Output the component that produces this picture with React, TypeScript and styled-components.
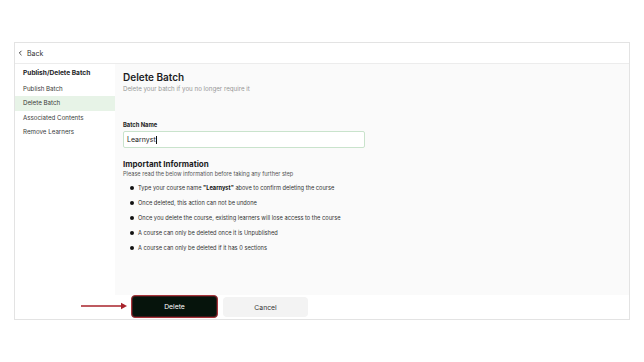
import React from "react";
import styled, { createGlobalStyle } from "styled-components";

const GlobalStyle = createGlobalStyle`
  html, body {
    margin: 0;
    padding: 0;
    background: #ffffff;
  }
  body {
    font-family: Inter, "Noto Sans", "Liberation Sans", sans-serif;
    color: #1d1d1f;
  }
`;

const Page = styled.div`
  width: 644px;
  height: 362px;
  padding: 42px 14px 0 14px;
  box-sizing: border-box;
`;

const Frame = styled.div`
  width: 616px;
  height: 278px;
  border: 1px solid #e3e3e3;
  box-sizing: border-box;
  display: flex;
  flex-direction: column;
  background: #ffffff;
`;

const TopBar = styled.div`
  height: 20px;
  flex-shrink: 0;
  display: flex;
  align-items: center;
  gap: 4px;
  padding-left: 3px;
  border-bottom: 1px solid #ececec;
  font-size: 7px;
  color: #333;
`;

const Body = styled.div`
  flex: 1;
  display: flex;
  min-height: 0;
`;

const Sidebar = styled.nav`
  width: 100px;
  flex-shrink: 0;
  padding-top: 2px;
  display: flex;
  flex-direction: column;
`;

const SideTitle = styled.div`
  font-size: 6.6px;
  font-weight: 700;
  color: #1d1d1f;
  padding: 0 8px;
  height: 14px;
  line-height: 14px;
  margin-bottom: 1.5px;
`;

const SideItem = styled.div<{ active?: boolean }>`
  font-size: 6.2px;
  color: #3a3a3a;
  padding: 0 8px;
  height: 14.6px;
  line-height: 14.6px;
  background: ${(p) => (p.active ? "#e7f3e7" : "transparent")};
`;

const Main = styled.div`
  flex: 1;
  display: flex;
  flex-direction: column;
`;

const Content = styled.section`
  flex: 1;
  background: #fafafa;
  padding: 6px 8px 0 8px;
`;

const Title = styled.h1`
  margin: 0;
  font-size: 10px;
  font-weight: 600;
  color: #1d1d1f;
  line-height: 14px;
`;

const Subtitle = styled.p`
  margin: 0;
  font-size: 6.2px;
  color: #969696;
  line-height: 10px;
`;

const Label = styled.label`
  display: block;
  margin-top: 27px;
  font-size: 5.8px;
  font-weight: 700;
  color: #222;
  line-height: 8px;
`;

const Input = styled.div`
  margin-top: 2px;
  width: 242px;
  height: 17px;
  box-sizing: border-box;
  border: 1px solid #c9e3cc;
  border-radius: 2px;
  background: #ffffff;
  display: flex;
  align-items: center;
  padding-left: 3px;
  font-size: 7px;
  color: #222;
`;

const Caret = styled.span`
  display: inline-block;
  width: 0.8px;
  height: 8px;
  background: #111;
  margin-left: 0.5px;
`;

const InfoTitle = styled.h2`
  margin: 11px 0 0 0;
  font-size: 8px;
  font-weight: 700;
  color: #1d1d1f;
  line-height: 10px;
`;

const InfoNote = styled.p`
  margin: 0;
  font-size: 5.6px;
  color: #555;
  line-height: 10px;
`;

const List = styled.ul`
  list-style: none;
  margin: 1px 0 0 0;
  padding: 0 0 0 7px;
  display: flex;
  flex-direction: column;
`;

const Item = styled.li`
  display: flex;
  align-items: center;
  gap: 4px;
  height: 15px;
  font-size: 5.7px;
  color: #333;
`;

const Dot = styled.span`
  width: 4px;
  height: 4px;
  border-radius: 50%;
  background: #111;
  flex-shrink: 0;
`;

const Footer = styled.footer`
  position: relative;
  height: 24px;
  flex-shrink: 0;
  display: flex;
  align-items: flex-start;
  gap: 5px;
  padding-left: 16px;
`;

const Button = styled.button<{ primary?: boolean }>`
  width: ${(p) => (p.primary ? "87px" : "85px")};
  height: ${(p) => (p.primary ? "23px" : "20px")};
  margin-top: ${(p) => (p.primary ? "0" : "2px")};
  box-sizing: border-box;
  border-radius: 4px;
  font-family: inherit;
  font-size: 6.8px;
  cursor: pointer;
  border: ${(p) => (p.primary ? "1.5px solid #a8343a" : "none")};
  background: ${(p) => (p.primary ? "#06140c" : "#f3f3f3")};
  color: ${(p) => (p.primary ? "#ffffff" : "#333")};
  box-shadow: ${(p) => (p.primary ? "inset 0 0 0 1px #3a1a1a" : "none")};
`;

const Arrow = styled.svg`
  position: absolute;
  left: -34px;
  top: 7px;
`;

const items = [
  <>
    Type your course name <b style={{ color: "#111" }}>"Learnyst"</b> above to
    confirm deleting the course
  </>,
  <>Once deleted, this action can not be undone</>,
  <>Once you delete the course, existing learners will lose access to the course</>,
  <>A course can only be deleted once it is Unpublished</>,
  <>A course can only be deleted if it has 0 sections</>,
];

export default function App() {
  return (
    <>
      <GlobalStyle />
      <Page>
        <Frame>
          <TopBar>
            <svg width="5" height="6" viewBox="0 0 5 6">
              <path d="M3.5 0.8 L1.3 3 L3.5 5.2" stroke="#444" strokeWidth="1" fill="none" />
            </svg>
            Back
          </TopBar>
          <Body>
            <Sidebar>
              <SideTitle>Publish/Delete Batch</SideTitle>
              <SideItem>Publish Batch</SideItem>
              <SideItem active>Delete Batch</SideItem>
              <SideItem>Associated Contents</SideItem>
              <SideItem>Remove Learners</SideItem>
            </Sidebar>
            <Main>
              <Content>
                <Title>Delete Batch</Title>
                <Subtitle>Delete your batch if you no longer require it</Subtitle>
                <Label>Batch Name</Label>
                <Input>
                  Learnyst
                  <Caret />
                </Input>
                <InfoTitle>Important Information</InfoTitle>
                <InfoNote>Please read the below information before taking any further step</InfoNote>
                <List>
                  {items.map((text, i) => (
                    <Item key={i}>
                      <Dot />
                      <span>{text}</span>
                    </Item>
                  ))}
                </List>
              </Content>
              <Footer>
                <Arrow width="48" height="8" viewBox="0 0 48 8">
                  <line x1="0" y1="4" x2="42" y2="4" stroke="#a8232b" strokeWidth="1.4" />
                  <path d="M40 0.8 L46 4 L40 7.2 Z" fill="#a8232b" />
                </Arrow>
                <Button primary>Delete</Button>
                <Button>Cancel</Button>
              </Footer>
            </Main>
          </Body>
        </Frame>
      </Page>
    </>
  );
}
